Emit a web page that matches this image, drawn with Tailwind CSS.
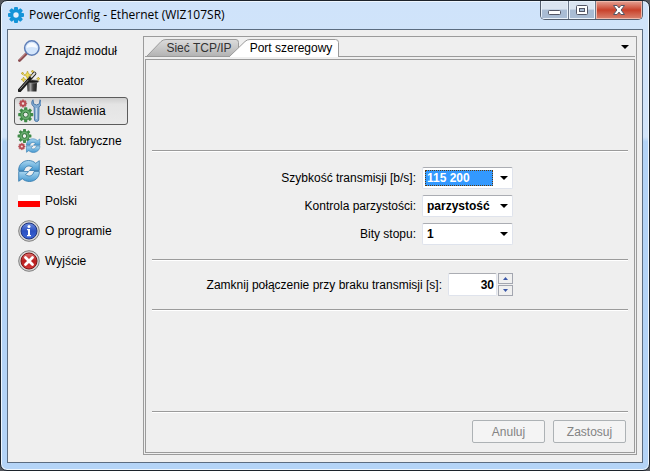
<!DOCTYPE html>
<html lang="pl">
<head>
  <meta charset="UTF-8" />
  <meta name="viewport" content="width=device-width, initial-scale=1.0" />
  <title>PowerConfig - Ethernet (WIZ107SR)</title>
  <script src="https://cdn.jsdelivr.net/npm/@tailwindcss/browser@4"></script>
</head>
<body class="bg-[#55585e] h-screen font-['Liberation_Sans',Arial,sans-serif] text-[12px] leading-4 text-black">

  <!-- Window frame -->
  <div class="h-full flex flex-col rounded-[7px] border border-[#1c232b] bg-[#b9d6f7] bg-linear-to-b from-[#cfe3fa] from-0% via-[#d3e5fa] via-29% to-[#b4d4f7] to-30% shadow-[inset_0_0_0_1px_#eef6fe] px-[6px] pb-[7px]">

    <!-- Title bar -->
    <header class="h-[28px] shrink-0 flex items-start justify-between">
      <div class="flex items-center gap-[5px] h-[28px] pl-px">
        <svg class="size-4" viewBox="0 0 16 16">
          <g fill="#1494d8">
            <circle cx="8" cy="8" r="6" />
            <g id="teeth"><rect x="6" y="0" width="4" height="16" rx="1" /><rect x="0" y="6" width="16" height="4" rx="1" /></g>
            <use href="#teeth" transform="rotate(45 8 8)" />
          </g>
          <circle cx="8" cy="8" r="2.7" fill="#e4f0fc" />
        </svg>
        <h1 class="font-['Open_Sans','Noto_Sans',sans-serif] text-[12px]">PowerConfig - Ethernet (WIZ107SR)</h1>
      </div>
      <div class="flex h-[19px] rounded-b-[5px] border border-t-0 border-[#525d6d] overflow-hidden">
        <button aria-label="Minimalizuj" class="w-[28px] flex items-center justify-center border-r border-[#6b7789] bg-linear-to-b from-[#dbe5f1] from-45% to-[#a9bcd4] to-50% shadow-[inset_0_0_0_1px_#e9f1fa]">
          <svg class="w-[13px] h-[11px]" viewBox="0 0 13 11"><rect x=".5" y="5.5" width="12" height="4" rx="1" fill="#fff" stroke="#535666" /></svg>
        </button>
        <button aria-label="Maksymalizuj" class="w-[27px] flex items-center justify-center border-r border-[#6b7789] bg-linear-to-b from-[#dbe5f1] from-45% to-[#a9bcd4] to-50% shadow-[inset_0_0_0_1px_#e9f1fa]">
          <svg class="w-3 h-[11px]" viewBox="0 0 12 11"><rect x=".5" y=".5" width="11" height="9" rx="1" fill="#fff" stroke="#535666" /><rect x="3.5" y="3.5" width="5" height="3" fill="#a9bcd4" stroke="#535666" /></svg>
        </button>
        <button aria-label="Zamknij" class="w-[46px] flex items-center justify-center bg-linear-to-b from-[#e3a296] via-[#c8402a] via-50% to-[#d9826f] shadow-[inset_0_0_0_1px_#f0b9ab]">
          <svg class="w-3 h-[11px]" viewBox="0 0 12 11"><path d="M.5.5h3.600L6 2.900 7.900.5h3.600L8.100 5l3.400 4.500H7.900L6 7.100 4.100 9.500H.5L3.900 5z" fill="#fff" stroke="#535666" /></svg>
        </button>
      </div>
    </header>

    <!-- Client area -->
    <div class="grow flex border border-[#5b6c80] bg-[#efefef] pt-[6px] pb-[7px] pl-[6px] pr-[5px] gap-[15px]">

      <nav class="w-[114px] shrink-0 flex flex-col gap-[2px] pt-px">
        <button class="h-[28px] flex items-center gap-[5px] pl-1">
          <svg class="size-[22px]" viewBox="0 0 22 22">
            <path d="M1.500 20.500l7-7" stroke="#8a4a4e" stroke-width="2.800" stroke-linecap="round" />
            <path d="M1.500 19.700l6.500-6.500" stroke="#c48a8a" />
            <circle cx="13.800" cy="8" r="7.200" fill="#d3e5fb" stroke="#5f7fb8" stroke-width="1.500" />
            <path d="M8.500 8a5.300 5.300 0 0 1 10.600 0c-4-1.500-7-1.500-10.600 0z" fill="#f6faff" />
          </svg>
          Znajdź moduł
        </button>
        <button class="h-[28px] flex items-center gap-[5px] pl-1">
          <svg class="size-[22px]" viewBox="0 0 22 22">
            <defs><linearGradient id="hat"><stop stop-color="#222" /><stop offset=".35" stop-color="#a0a0a0" /><stop offset=".6" stop-color="#444" /><stop offset="1" stop-color="#1c1c1c" /></linearGradient></defs>
            <path d="M9 12h10l-.5 9.500h-9z" fill="url(#hat)" />
            <ellipse cx="14.500" cy="11.500" rx="6.300" ry="1.600" fill="#1a1a1a" stroke="#8c8c8c" stroke-width=".7" />
            <path d="M1.500 20.500L16.500 3.500" stroke="#1c1c1c" stroke-width="3.600" stroke-linecap="round" />
            <path d="M13.500 6.700l3-3.400" stroke="#e2e2e2" stroke-width="2" stroke-linecap="round" />
            <path d="M1.800 19.500l8.500-9.600" stroke="#888" />
            <path d="M9.500 1l1.100 2.900L13.500 5l-2.900 1.100L9.500 9 8.400 6.100 5.500 5l2.900-1.100zM5.500 7l.7 1.800 1.800.7-1.800.7-.7 1.800-.7-1.800-1.800-.7 1.800-.7zM20.300 7l.5 1.200 1.200.5-1.200.5-.5 1.200-.5-1.200-1.200-.5 1.200-.5zM14.500 0l.4 1 1 .4-1 .4-.4 1-.4-1-1-.4 1-.4zM4.500 2l.4 1 1 .4-1 .4-.4 1-.4-1-1-.4 1-.4z" fill="#f0dc55" stroke="#b39b1e" stroke-width=".6" />
          </svg>
          Kreator
        </button>
        <button aria-current="page" class="h-[28px] flex items-center gap-[6px] pl-[3px] rounded-[3px] border border-[#5c5c5c] bg-linear-to-b from-[#cfcfcf] via-[#e4e4e4] via-25% to-[#e9e9e9]">
          <svg class="w-[23px] h-6" viewBox="0 0 23 24">
            <defs>
              <g id="gear">
                <circle r="5.500" />
                <g id="cogs"><rect x="-1.600" y="-7.500" width="3.200" height="15" rx=".6" /><rect x="-7.500" y="-1.600" width="15" height="3.200" rx=".6" /></g>
                <use href="#cogs" transform="rotate(45)" />
              </g>
            </defs>
            <use href="#gear" transform="translate(5 4.500) scale(.5)" fill="#c6555c" stroke="#8e2b33" stroke-width=".6" />
            <circle cx="5" cy="4.500" r="1.200" fill="#f3dcdc" />
            <use href="#gear" transform="translate(7.700 15.700)" fill="#3f8a47" />
            <circle cx="7.700" cy="15.700" r="4.600" fill="#68ad6e" />
            <circle cx="7.700" cy="15.700" r="2.500" fill="#e4e9e4" stroke="#2f6e38" />
            <path d="M15 .8c-2 2.200-1.700 5.500 1.100 7L16.500 21a2.200 2.200 0 0 0 4.200 0l.3-13.200c2.800-1.500 3-4.800 1-7l-.6 4-3 1.200-2.800-1.200z" fill="#85add2" stroke="#3f6fa1" stroke-width=".9" />
            <path d="M18.300 9v11" stroke="#d5e6f5" />
          </svg>
          Ustawienia
        </button>
        <button class="h-[28px] flex items-center gap-[5px] pl-1">
          <svg class="size-[22px] overflow-visible" viewBox="0 0 22 22">
            <use href="#gear" transform="translate(6.500 6) scale(.92)" fill="#3f8a47" />
            <circle cx="6.500" cy="6" r="4.300" fill="#68ad6e" />
            <circle cx="6.500" cy="6" r="2.300" fill="#edf2ed" stroke="#2f6e38" />
            <use href="#gear" transform="translate(3.800 16.500) scale(.44)" fill="#c6555c" stroke="#8e2b33" stroke-width=".6" />
            <circle cx="3.800" cy="16.500" r="1.100" fill="#f3dcdc" />
            <use href="#sync" transform="translate(8 8.500) scale(.65)" />
          </svg>
          Ust. fabryczne
        </button>
        <button class="h-[28px] flex items-center gap-[5px] pl-1">
          <svg class="size-[22px]" viewBox="0 0 22 22">
            <defs>
              <linearGradient id="sky" x2="0" y2="1"><stop stop-color="#a9d6f0" /><stop offset="1" stop-color="#4799d0" /></linearGradient>
              <g id="sync" fill="url(#sky)" stroke="#2f76ab" stroke-width=".8" stroke-linejoin="round">
                <path d="M.6 10.500C.6 4 5.500.5 10.500.5c3 0 5.200 1 7.200 2.800L21.300.7v9.800h-10l3.200-3.200C11 4.800 7 6 6 10.500z" />
                <path d="M21.400 11.500c0 6.500-4.900 10-9.900 10-3 0-5.200-1-7.200-2.800L.7 21.300v-9.800h10l-3.200 3.200c3.500 2.500 7.500 1.300 8.500-3.200z" />
              </g>
            </defs>
            <use href="#sync" />
          </svg>
          Restart
        </button>
        <button class="h-[28px] flex items-center gap-[5px] pl-1">
          <svg class="size-[22px]" viewBox="0 0 22 22"><path d="M0 5h22v6H0z" fill="#fff" /><path d="M0 11h22v6H0z" fill="#f00" /></svg>
          Polski
        </button>
        <button class="h-[28px] flex items-center gap-[5px] pl-1">
          <svg class="size-[22px]" viewBox="0 0 22 22">
            <defs><linearGradient id="blue" x2="0" y2="1"><stop stop-color="#6f8fe0" /><stop offset=".5" stop-color="#2b50c0" /><stop offset="1" stop-color="#3c66d8" /></linearGradient></defs>
            <circle cx="11" cy="11" r="10.300" fill="#d3d3d3" stroke="#808080" />
            <circle cx="11" cy="11" r="8" fill="url(#blue)" stroke="#1f3480" />
            <circle cx="11" cy="6.500" r="1.500" fill="#fff" />
            <path d="M9 9h3v6h1v1.200H9V15h1v-4.800H9z" fill="#fff" />
          </svg>
          O programie
        </button>
        <button class="h-[28px] flex items-center gap-[5px] pl-1">
          <svg class="size-[22px]" viewBox="0 0 22 22">
            <defs><linearGradient id="red" x2="0" y2="1"><stop stop-color="#e07070" /><stop offset=".5" stop-color="#b81c1c" /><stop offset="1" stop-color="#d43a3a" /></linearGradient></defs>
            <circle cx="11" cy="11" r="10.300" fill="#d3d3d3" stroke="#808080" />
            <circle cx="11" cy="11" r="8" fill="url(#red)" stroke="#7c1515" />
            <path d="M7.500 7.500l7 7m0-7l-7 7" stroke="#fff" stroke-width="2.800" stroke-linecap="round" />
          </svg>
          Wyjście
        </button>
      </nav>

      <main class="grow flex flex-col border border-[#9b9b9b] px-px pb-px">

        <!-- Tabs -->
        <div role="tablist" class="h-[20px] shrink-0 flex items-end">
          <button role="tab" aria-selected="false" class="relative w-[94px] h-[18px] pl-[14px] text-[#333] border-b border-[#9b9b9b]">
            <svg class="absolute left-0 top-0 w-[94px] h-[17px]" viewBox="0 0 94 17">
              <defs><linearGradient id="tab" x2="0" y2="1"><stop stop-color="#dcdcdc" /><stop offset="1" stop-color="#b4b4b4" /></linearGradient></defs>
              <path d="M2 17L16 2.500Q18 .5 21 .5H91q2.500 0 2.500 3V17" fill="url(#tab)" stroke="#9b9b9b" />
            </svg>
            <span class="relative">Sieć TCP/IP</span>
          </button>
          <button role="tab" aria-selected="true" class="relative w-[104px] h-[18px] -ml-1 pl-2">
            <svg class="absolute -left-[7px] top-0 w-[111px] h-[18px]" viewBox="0 0 111 18">
              <path d="M1 18L17 2.500Q19 .5 22 .5H107.500q3 0 3 3V18" fill="#fff" stroke="#9b9b9b" />
            </svg>
            <span class="relative">Port szeregowy</span>
          </button>
          <div class="grow h-[18px] flex justify-end items-start pr-[6px] pt-1 border-b border-[#9b9b9b]">
            <button aria-label="Lista kart" class="w-2 h-2 flex items-center"><svg class="w-2 h-1" viewBox="0 0 8 4"><path d="M0 0h8L4 4z" /></svg></button>
          </div>
        </div>

        <form class="grow mt-[2px] flex flex-col border border-[#9b9b9b] px-[6px]">
          <div class="h-[90px] shrink-0"></div>

          <fieldset class="h-[109px] shrink-0 flex flex-col gap-[6px] items-end pt-4 pr-[115px] border-t border-[#9b9b9b] shadow-[inset_0_1px_0_#fff]">
            <div class="flex items-center gap-[6px]">
              <label for="baud">Szybkość transmisji [b/s]:</label>
              <div class="w-[91px] h-[22px] flex items-center justify-between bg-white border border-[#dfe3ec] border-t-[#abadb3] pl-[2px] pr-1 rounded-[2px]">
                <select id="baud" class="appearance-none w-[68px] h-4 font-bold leading-[14px] bg-[#3399ff] text-white border border-dotted border-[#5c3a10] pl-px">
                  <option>115 200</option>
                </select>
                <svg class="w-2 h-1 pointer-events-none" viewBox="0 0 8 4"><path d="M0 0h8L4 4z" /></svg>
              </div>
            </div>
            <div class="flex items-center gap-[6px]">
              <label for="parity">Kontrola parzystości:</label>
              <div class="w-[91px] h-[22px] flex items-center justify-between bg-white border border-[#dfe3ec] border-t-[#abadb3] pl-[2px] pr-1 rounded-[2px]">
                <select id="parity" class="appearance-none w-[68px] h-4 font-bold leading-[14px] outline-none border border-white pl-px">
                  <option>parzystość</option>
                </select>
                <svg class="w-2 h-1 pointer-events-none" viewBox="0 0 8 4"><path d="M0 0h8L4 4z" /></svg>
              </div>
            </div>
            <div class="flex items-center gap-[6px]">
              <label for="stop">Bity stopu:</label>
              <div class="w-[91px] h-[22px] flex items-center justify-between bg-white border border-[#dfe3ec] border-t-[#abadb3] pl-[2px] pr-1 rounded-[2px]">
                <select id="stop" class="appearance-none w-[68px] h-4 font-bold leading-[14px] outline-none border border-white pl-px">
                  <option>1</option>
                </select>
                <svg class="w-2 h-1 pointer-events-none" viewBox="0 0 8 4"><path d="M0 0h8L4 4z" /></svg>
              </div>
            </div>
          </fieldset>

          <div class="h-[50px] shrink-0 flex items-center justify-end pr-[115px] border-t border-[#9b9b9b] shadow-[inset_0_1px_0_#fff]">
            <label for="timeout" class="mr-[6px]">Zamknij połączenie przy braku transmisji [s]:</label>
            <input id="timeout" type="text" inputmode="numeric" value="30" class="w-[49px] h-[23px] bg-white border border-[#dfe3ec] border-t-[#abadb3] rounded-[2px] pr-[2px] text-right font-bold outline-none" />
            <div class="flex flex-col gap-px ml-px">
              <button type="button" aria-label="Więcej" class="w-[15px] h-[11px] flex items-center justify-center border border-[#a3a6b0] bg-[#f0f0f0]"><svg class="w-[5px] h-[3px]" viewBox="0 0 5 3"><path d="M2.500 0L5 3H0z" fill="#3a57a8" /></svg></button>
              <button type="button" aria-label="Mniej" class="w-[15px] h-[11px] flex items-center justify-center border border-[#a3a6b0] bg-[#f0f0f0]"><svg class="w-[5px] h-[3px]" viewBox="0 0 5 3"><path d="M2.500 3L5 0H0z" fill="#3a57a8" /></svg></button>
            </div>
          </div>

          <div class="grow border-t border-[#9b9b9b] shadow-[inset_0_1px_0_#fff]"></div>

          <div class="h-[41px] shrink-0 flex gap-2 justify-end pt-2 pr-[2px] border-t border-[#9b9b9b] shadow-[inset_0_1px_0_#fff]">
            <button type="button" disabled class="w-[73px] h-[23px] rounded-[2px] border border-[#adb2b5] bg-[#f4f4f4] text-[#838383]">Anuluj</button>
            <button type="submit" disabled class="w-[73px] h-[23px] rounded-[2px] border border-[#adb2b5] bg-[#f4f4f4] text-[#838383]">Zastosuj</button>
          </div>
        </form>
      </main>
    </div>
  </div>

</body>
</html>
